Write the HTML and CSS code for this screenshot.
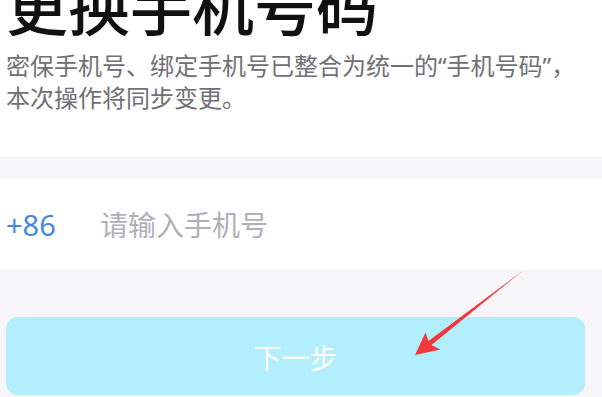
FILE: index.html
```html
<!DOCTYPE html>
<html lang="zh-CN">
<head>
    <meta charset="UTF-8">
    <meta name="viewport" content="width=device-width, initial-scale=1.0">
    <title>更换手机号码</title>
    <link rel="stylesheet" href="styles.css">
</head>
<body>
    <div class="header">
        <h1 class="title">更换手机号码</h1>
        <p class="desc">密保手机号、绑定手机号已整合为统一的“手机号码”，本次操作将同步变更。</p>
    </div>

    <div class="spacer"></div>

    <div class="phone-row">
        <span class="area-code">+86</span>
        <input type="text" class="phone-input" placeholder="请输入手机号" autocomplete="off">
    </div>

    <div class="actions">
        <button class="next-btn" disabled>下一步</button>
    </div>

    <!-- 标注箭头 -->
    <svg class="arrow" width="602" height="397" viewBox="0 0 602 397">
        <polygon points="415,355 425.5,332.5 428.5,341 523,270.5 431.5,345 440.5,349.5" fill="#f2383a"/>
    </svg>
</body>
</html>
```

FILE: styles.css
```css
html, body {
    margin: 0;
    padding: 0;
    height: 100%;
    overflow: hidden;
}
body {
    font-family: "Noto Sans CJK SC", "Noto Sans", sans-serif;
    background-color: #f6f6f8;
    position: relative;
}
.header {
    background-color: white;
    padding: 0 6px 43px 6px;
}
.title {
    margin: -27px 0 0 0;
    font-size: 62px;
    line-height: 62px;
    font-weight: 500;
    color: #111111;
}
.desc {
    margin: 15px 0 0 0;
    font-family: "Noto Sans", "Noto Sans CJK SC", sans-serif;
    font-size: 24px;
    line-height: 32px;
    color: #707075;
    width: 576px;
}
.spacer {
    height: 21px;
}
.phone-row {
    display: flex;
    align-items: center;
    height: 92px;
    padding: 0 6px;
    background-color: white;
}
.area-code {
    width: 94px;
    font-family: "Noto Sans", sans-serif;
    font-size: 29px;
    color: #4a87dc;
}
.phone-input {
    flex: 1;
    border: none;
    outline: none;
    padding: 0;
    font-family: inherit;
    font-size: 28px;
    color: #333;
    background: transparent;
}
.phone-input::placeholder {
    color: #b0b0b7;
}
.actions {
    padding: 47px 17px 0 6px;
}
.next-btn {
    width: 100%;
    height: 78px;
    padding-top: 3px;
    border: none;
    border-radius: 12px;
    background-color: #b3eefc;
    color: white;
    font-family: inherit;
    font-size: 28px;
}
.arrow {
    position: absolute;
    left: 0;
    top: 0;
    pointer-events: none;
}
```
